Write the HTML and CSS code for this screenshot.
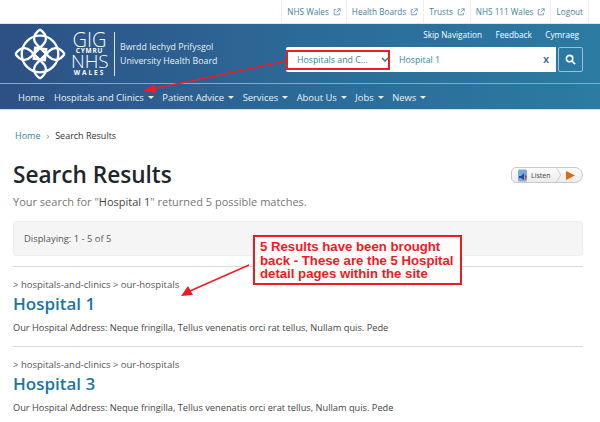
FILE: index.html
```html
<!DOCTYPE html>
<html lang="en">
<head>
<meta charset="utf-8">
<title>Search Results</title>
<link rel="stylesheet" href="styles.css">
</head>
<body>
<div class="topbar">
  <a class="toplink">NHS Wales <svg class="ext" viewBox="0 0 10 10"><path d="M4 2H1.500v6.500H8V6M5.500 1H9v3.500M9 1L4.500 5.500"/></svg></a>
  <a class="toplink">Health Boards <svg class="ext" viewBox="0 0 10 10"><path d="M4 2H1.500v6.500H8V6M5.500 1H9v3.500M9 1L4.500 5.500"/></svg></a>
  <a class="toplink">Trusts <svg class="ext" viewBox="0 0 10 10"><path d="M4 2H1.500v6.500H8V6M5.500 1H9v3.500M9 1L4.500 5.500"/></svg></a>
  <a class="toplink">NHS 111 Wales <svg class="ext" viewBox="0 0 10 10"><path d="M4 2H1.500v6.500H8V6M5.500 1H9v3.500M9 1L4.500 5.500"/></svg></a>
  <a class="toplink">Logout</a>
</div>
<header class="masthead">
  <div class="brandrow">
    <div class="brand">
      <svg class="knot" viewBox="0 0 54 54">
        <g fill="none" stroke="#fff" stroke-width="2.400">
          <circle cx="27" cy="27" r="19"/>
          <path d="M27 1.500c7 5 8 11 3 16l-8 8M27 1.500c-7 5-8 11-3 16l8 8"/>
          <path d="M27 52.500c7-5 8-11 3-16l-8-8M27 52.500c-7-5-8-11-3-16l8-8"/>
          <path d="M1.500 27c5-7 11-8 16-3l8 8M1.500 27c5 7 11 8 16 3l8-8"/>
          <path d="M52.500 27c-5-7-11-8-16-3l-8 8M52.500 27c-5 7-11 8-16 3l-8-8"/>
          <path d="M22 20.500l11.500 1.500-1.500 11.500-11.500-1.500z"/>
        </g>
      </svg>
      <div class="wordmark">
        <span class="wm-big wm-gig">GIG</span>
        <span class="wm-small">CYMRU</span>
        <span class="wm-big">NHS</span>
        <span class="wm-small wm-wide">WALES</span>
      </div>
      <div class="boardname">Bwrdd Iechyd Prifysgol<br>University Health Board</div>
    </div>
    <div class="tools">
      <div class="skiplinks"><a>Skip Navigation</a><a>Feedback</a><a>Cymraeg</a></div>
      <form class="search">
        <div class="scope"><span>Hospitals and C...</span><svg class="chev" viewBox="0 0 8 6"><path d="M1 1l3 3 3-3"/></svg></div>
        <div class="query"><span>Hospital 1</span><b>X</b></div>
        <div class="go"><svg viewBox="0 0 12 12"><circle cx="5" cy="5" r="3.500"/><path d="M7.700 7.700L11 11"/></svg></div>
      </form>
    </div>
  </div>
  <nav class="mainnav">
    <a class="home">Home</a><a class="dd">Hospitals and Clinics</a><a class="dd">Patient Advice</a><a class="dd">Services</a><a class="dd">About Us</a><a class="dd">Jobs</a><a class="dd">News</a>
  </nav>
</header>
<main class="content">
  <div class="crumbs"><a>Home</a><i>›</i><span>Search Results</span></div>
  <div class="titlerow">
    <h1>Search Results</h1>
    <div class="listen">
      <svg class="spk" viewBox="0 0 12 13"><rect x="1" y="0.500" width="9" height="12" rx="1.500" fill="#7fa9d8"/><path d="M2 7h2l3-3v7L4 9H2z" fill="#1c4f9a"/><path d="M8 5l2 3-2 3z" fill="#c9502a"/></svg>
      <span>Listen</span>
      <svg class="sep" viewBox="0 0 6 16"><path d="M0 0l5 8-5 8"/></svg>
      <svg class="play" viewBox="0 0 9 9"><path d="M0 0l9 4.500L0 9z"/></svg>
    </div>
  </div>
  <p class="summary">Your search for "<b>Hospital 1</b>" returned 5 possible matches.</p>
  <div class="display">Displaying: 1 - 5 of 5</div>
  <article class="result">
    <div class="path">&gt; hospitals-and-clinics &gt; our-hospitals</div>
    <h2>Hospital 1</h2>
    <p>Our Hospital Address: Neque fringilla, Tellus venenatis orci rat tellus, Nullam quis. Pede</p>
  </article>
  <article class="result">
    <div class="path">&gt; hospitals-and-clinics &gt; our-hospitals</div>
    <h2>Hospital 3</h2>
    <p>Our Hospital Address: Neque fringilla, Tellus venenatis orci erat tellus, Nullam quis. Pede</p>
  </article>
</main>
<div class="scopebox"></div>
<div class="callout">5 Results have been brought<br>back - These are the 5 Hospital<br>detail pages within the site</div>
<svg class="arrows" viewBox="0 0 600 422">
  <path d="M287 61L152 89" class="shaft"/>
  <path d="M143 91L155 84 156 93z" class="head"/>
  <path d="M249 265L190 291" class="shaft"/>
  <path d="M181 296L188 286 193 295z" class="head"/>
</svg>
</body>
</html>
```
FILE: styles.css
```css
* { box-sizing: border-box; }
html, body { margin: 0; padding: 0; }
body {
  width: 600px;
  height: 422px;
  overflow: hidden;
  position: relative;
  background: #fff;
  color: #333;
  font-family: "Open Sans", "Noto Sans", sans-serif;
}
a { text-decoration: none; }

.topbar {
  height: 24px;
  display: flex;
  justify-content: flex-end;
  padding-right: 11px;
  background: #fff;
  border-bottom: 1px solid #e3e6e8;
}
.toplink {
  display: flex;
  align-items: center;
  gap: 4px;
  padding: 0 5px;
  font-size: 8.200px;
  color: #3f7f9e;
  border-left: 1px solid #eee;
}
.toplink:last-child { border-right: 1px solid #eee; }
.ext { width: 8px; height: 8px; fill: none; stroke: #6b98b0; stroke-width: 1.100; }

.masthead {
  height: 86px;
  background: linear-gradient(90deg, #2d5085 0%, #2c6a98 50%, #2b7ba3 100%);
  border-bottom: 1px solid #cfe0ea;
}
.brandrow {
  height: 60px;
  display: flex;
  justify-content: space-between;
  padding: 0 17px 0 14px;
  border-bottom: 1px solid #86a9c4;
}
.brand { display: flex; align-items: center; color: #fff; }
.knot { width: 52px; height: 52px; margin-right: 5px; }
.wordmark {
  display: flex;
  flex-direction: column;
  align-items: stretch;
  width: 37px;
  text-align: center;
}
.wm-big { font-size: 19px; line-height: 15px; font-weight: 300; }
.wm-gig { font-size: 20px; }
.wm-small { font-size: 6.500px; line-height: 7px; font-weight: 700; letter-spacing: 0.800px; }
.wm-wide { letter-spacing: 2px; }
.boardname {
  margin-left: 6px;
  padding: 2px 0 0 5px;
  height: 44px;
  border-left: 1px solid #dfe8f0;
  display: flex;
  align-items: center;
  font-size: 8.800px;
  line-height: 13.500px;
  color: #e8eff5;
}
.tools { display: flex; flex-direction: column; align-items: flex-end; }
.skiplinks {
  display: flex;
  gap: 13.500px;
  height: 19px;
  padding-top: 5px;
  padding-right: 4px;
  font-size: 8.200px;
  color: #fff;
}
.search { display: flex; margin-top: 4px; height: 25px; }
.scope, .query {
  background: #fff;
  color: #3f7f9e;
  font-size: 8.800px;
  display: flex;
  align-items: center;
  justify-content: space-between;
}
.scope { width: 105px; padding: 0 2px 0 11px; border-radius: 2px 0 0 2px; }
.chev { width: 8px; height: 6px; fill: none; stroke: #2b6a90; stroke-width: 1.300; }
.query { width: 165px; padding: 0 7px 0 8px; margin-right: 2px; }
.query b { font-weight: 700; font-size: 8.500px; color: #2d5f8a; }
.go {
  width: 25px;
  border: 1px solid #9cc0d5;
  border-radius: 2px;
  display: flex;
  align-items: center;
  justify-content: center;
}
.go svg { width: 11px; height: 11px; fill: none; stroke: #fff; stroke-width: 1.800; }

.mainnav {
  display: flex;
  align-items: center;
  height: 25px;
  padding: 1px 0 0 18px;
  gap: 8.500px;
  font-size: 9.400px;
  color: #e9f0f6;
}
.home { margin-right: 1px; }
.dd::after {
  content: "";
  display: inline-block;
  margin-left: 4px;
  vertical-align: 2px;
  border: 3px solid transparent;
  border-top-color: #e9f0f6;
  border-bottom-width: 0;
}

.content { padding: 0 17px 0 13px; }
.crumbs {
  display: flex;
  align-items: center;
  gap: 6px;
  height: 14px;
  margin: 18px 0 0 2px;
  font-size: 9px;
  color: #333;
}
.crumbs a { color: #3a7fa5; }
.crumbs i { font-style: normal; color: #777; }
.titlerow { display: flex; justify-content: space-between; align-items: center; margin-top: 16px; height: 34px; }
h1 { margin: 0; font-size: 22.600px; font-weight: 600; color: #212529; line-height: 34px; }
.listen {
  display: flex;
  align-items: center;
  width: 72px;
  height: 16px;
  padding: 0 0 0 5px;
  border: 1px solid #c5c9cc;
  border-radius: 5px 8px 8px 5px;
  background: linear-gradient(#fcfcfc, #ececec);
  font-size: 7px;
  color: #444;
}
.spk { width: 12px; height: 13px; margin-right: 2px; }
.sep { width: 6px; height: 14px; margin-left: 6px; fill: none; stroke: #c5c9cc; }
.play { width: 9px; height: 9px; margin-left: 4px; fill: #e3650f; }
.summary { margin: 1px 0 0; font-size: 11px; line-height: 18px; color: #777; }
.summary b { font-weight: 500; color: #444; }
.display {
  margin-top: 10px;
  height: 35px;
  display: flex;
  align-items: center;
  padding-left: 10px;
  font-size: 9.400px;
  color: #555;
  background: #f5f5f5;
  border: 1px solid #eee;
  border-radius: 3px;
}
.result { border-top: 1px solid #d6dadd; height: 80px; padding-top: 10px; }
.display + .result { margin-top: 10px; }
.path { font-size: 9.500px; line-height: 15px; color: #555; }
h2 { margin: 0; font-size: 17px; line-height: 24px; font-weight: 600; color: #1b76a0; }
.result p { margin: 5px 0 0; font-size: 9.250px; line-height: 14px; color: #444; }

.scopebox {
  position: absolute;
  left: 286px;
  top: 50px;
  width: 104px;
  height: 20px;
  border: 2px solid #ee1c25;
}
.callout {
  position: absolute;
  left: 253px;
  top: 235px;
  width: 209px;
  height: 50px;
  padding: 3px 0 0 5px;
  background: #fffdfb;
  border: 2px solid #f01a24;
  color: #f01a24;
  font-family: "Liberation Sans", Arial, sans-serif;
  font-size: 13.200px;
  font-weight: 700;
  line-height: 13.500px;
}
.arrows { position: absolute; left: 0; top: 0; width: 600px; height: 422px; pointer-events: none; }
.shaft { stroke: #ee1c25; stroke-width: 1.500; fill: none; }
.head { fill: #ee1c25; }
```
